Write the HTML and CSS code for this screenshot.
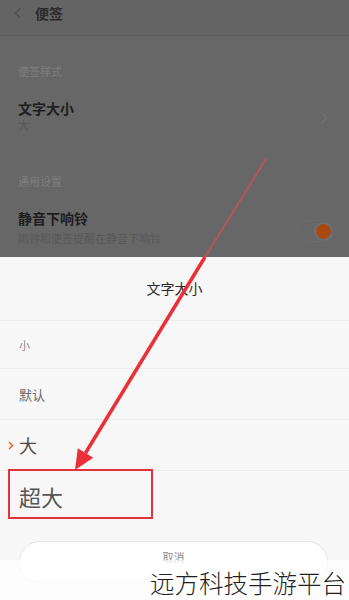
FILE: index.html
```html
<!DOCTYPE html>
<html lang="zh-CN">
<head>
<meta charset="utf-8">
<title>便签</title>
<link rel="stylesheet" href="styles.css">
</head>
<body>
<div class="screen">
  <div class="settings">
    <div class="topbar">
      <svg class="back" width="8" height="12" viewBox="0 0 8 12"><path d="M6.5 1 L1.5 6 L6.5 11" fill="none" stroke="#505050" stroke-width="1.4"/></svg>
      <span class="topbar-title">便签</span>
    </div>
    <div class="group-label first">便签样式</div>
    <div class="row row-size">
      <div class="row-text">
        <div class="row-title">文字大小</div>
        <div class="row-sub tight">大</div>
      </div>
      <svg class="chev" width="8" height="14" viewBox="0 0 8 14"><path d="M1.5 1.5 L6.5 7 L1.5 12.5" fill="none" stroke="#727272" stroke-width="1.3"/></svg>
    </div>
    <div class="group-label second">通用设置</div>
    <div class="row row-silent">
      <div class="row-text">
        <div class="row-title">静音下响铃</div>
        <div class="row-sub">闹钟和便签提醒在静音下响铃</div>
      </div>
      <div class="toggle"><span class="knob"></span></div>
    </div>
  </div>

  <div class="sheet">
    <div class="sheet-title">文字大小</div>
    <div class="options">
      <div class="opt opt-s"><span>小</span></div>
      <div class="opt opt-d"><span>默认</span></div>
      <div class="opt opt-l"><svg class="sel" width="6" height="9" viewBox="0 0 6 9"><path d="M1 1 L4.5 4.5 L1 8" fill="none" stroke="#e8622c" stroke-width="1.5"/></svg><span>大</span></div>
      <div class="opt opt-xl"><span>超大</span></div>
    </div>
    <div class="cancel"><span class="cancel-text">取消</span></div>
  </div>

  <div class="highlight"></div>
  <svg class="arrow" width="349" height="600" viewBox="0 0 349 600">
    <line x1="266" y1="159" x2="205" y2="257" stroke="#b0575c" stroke-width="2.2"/>
    <line x1="205" y1="257" x2="85.5" y2="453" stroke="#ea2f37" stroke-width="3.5"/>
    <polygon points="75,470 93.2,457.7 77.8,448.3" fill="#ea2f37"/>
  </svg>
  <div class="watermark"><span>远方科技手游平台</span></div>
</div>
</body>
</html>
```

FILE: styles.css
```css
* { box-sizing: border-box; }
html, body { margin: 0; padding: 0; }
body {
  width: 349px;
  height: 600px;
  overflow: hidden;
  font-family: "Noto Sans CJK SC", "Noto Sans", sans-serif;
  background: #f7f7f7;
}
.screen {
  position: relative;
  width: 349px;
  height: 600px;
  display: flex;
  flex-direction: column;
}
.settings {
  height: 257px;
  background: #676767;
  display: flex;
  flex-direction: column;
}
.topbar {
  height: 36px;
  background: #646464;
  border-bottom: 1px solid #5e5e5e;
  display: flex;
  align-items: flex-start;
  padding: 4px 0 0 14px;
  gap: 13px;
}
.back { margin-top: 3px; }
.topbar-title {
  font-size: 14px;
  line-height: 18px;
  font-weight: 700;
  color: #2b2b2b;
}
.group-label {
  font-size: 11px;
  line-height: 16px;
  color: #7e7e7e;
  padding-left: 18px;
}
.group-label.first { margin-top: 27px; }
.group-label.second { margin-top: 41px; }
.row {
  display: flex;
  align-items: center;
  justify-content: space-between;
  padding: 0 14px 0 18px;
}
.row-size { margin-top: 20px; }
.row-silent { margin-top: 20px; }
.row-title {
  font-size: 14px;
  line-height: 18px;
  font-weight: 700;
  color: #1e1e1e;
}
.row-sub {
  font-size: 11px;
  line-height: 14px;
  color: #585858;
  margin-top: 4px;
}
.row-sub.tight { margin-top: 1px; }
.chev { margin-right: 7px; margin-top: 4px; }
.toggle {
  width: 38px;
  height: 22px;
  border-radius: 11px;
  border: 1px solid #6a6c6e;
  display: flex;
  align-items: center;
  justify-content: flex-end;
  padding-right: 3px;
  margin-top: 8px;
}
.knob {
  width: 15px;
  height: 15px;
  border-radius: 50%;
  background: #a9490f;
  box-shadow: 0 0 0 2px #6c7176;
}
.sheet {
  flex: 1;
  background: #f7f7f7;
  display: flex;
  flex-direction: column;
}
.sheet-title {
  height: 64px;
  display: flex;
  align-items: center;
  justify-content: center;
  font-size: 14px;
  color: #2a2a2a;
  border-bottom: 1px solid #ececec;
  padding-bottom: 1px;
}
.options { display: flex; flex-direction: column; }
.opt {
  display: flex;
  align-items: center;
  padding-left: 19px;
  border-bottom: 1px solid #ececec;
  position: relative;
}
.opt-s { height: 48px; font-size: 11px; color: #8a8a8a; }
.opt-d { height: 51px; font-size: 13px; color: #6a6a6a; }
.opt-l { height: 51px; font-size: 18px; color: #4a4a4a; }
.opt-xl { height: 49px; font-size: 22px; color: #555; border-bottom: none; }
.sel { position: absolute; left: 8px; top: 21px; }
.cancel {
  margin: 21px 21px 0 19px;
  height: 42px;
  border-radius: 21px;
  background: #ffffff;
  border: 1px solid #e6e6e6;
  display: flex;
  align-items: flex-start;
  justify-content: center;
  padding-top: 9px;
}
.cancel-text {
  font-size: 11px;
  line-height: 12px;
  color: #8a8a8a;
}
.highlight {
  position: absolute;
  left: 8px;
  top: 469px;
  width: 145px;
  height: 50px;
  border: 2px solid #e2323f;
}
.arrow {
  position: absolute;
  left: 0;
  top: 0;
  pointer-events: none;
}
.watermark {
  position: absolute;
  left: 0;
  right: 0;
  bottom: 0;
  height: 40px;
  background: rgba(255, 255, 255, 0.72);
  display: flex;
  align-items: flex-end;
  justify-content: flex-end;
  padding: 0 3px 5px 0;
}
.watermark span {
  font-size: 24.5px;
  font-weight: 300;
  color: #1f1f1f;
  line-height: 24px;
}
```
